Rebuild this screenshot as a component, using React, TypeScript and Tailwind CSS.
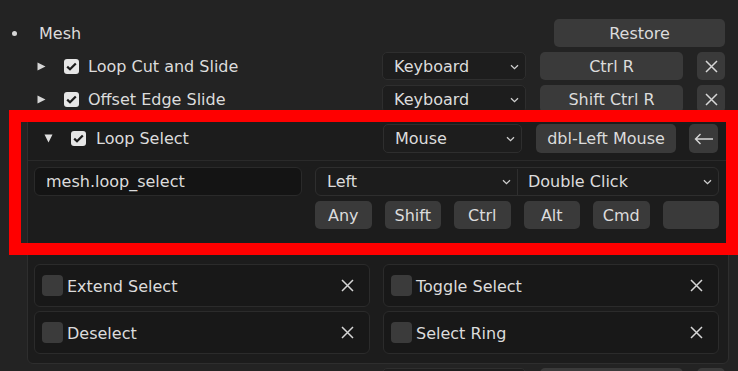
import React from 'react'

const font = { fontFamily: '"DejaVu Sans", "Liberation Sans", sans-serif' }

function Chevron() {
  return (
    <svg width="9" height="6" viewBox="0 0 9 6" className="shrink-0">
      <path d="M1 1.2 L4.5 4.6 L8 1.2" fill="none" stroke="#cfcfcf" strokeWidth="1.3" />
    </svg>
  )
}

function XIcon({ size = 13 }: { size?: number }) {
  return (
    <svg width={size} height={size} viewBox="0 0 13 13">
      <path d="M1 1 L12 12 M12 1 L1 12" stroke="#d6d6d6" strokeWidth="1.5" fill="none" />
    </svg>
  )
}

function Check() {
  return (
    <span className="flex h-[15px] w-[15px] items-center justify-center rounded-[3px] bg-[#e6e6e6]">
      <svg width="11" height="9" viewBox="0 0 11 9">
        <path d="M1.2 4.6 L4 7.3 L9.8 1.4" fill="none" stroke="#1b1b1b" strokeWidth="2.2" />
      </svg>
    </span>
  )
}

function TriRight() {
  return (
    <svg width="9" height="9" viewBox="0 0 9 9" className="shrink-0">
      <path d="M0.5 0.5 L8.5 4.5 L0.5 8.5 Z" fill="#d6d6d6" />
    </svg>
  )
}

function TriDown() {
  return (
    <svg width="9" height="9" viewBox="0 0 9 9" className="shrink-0">
      <path d="M0.5 0.5 L8.5 0.5 L4.5 8.5 Z" fill="#e0e0e0" />
    </svg>
  )
}

function Dropdown({ label, className }: { label: string; className: string }) {
  return (
    <div
      className={`flex h-[28px] items-center justify-between rounded-[5px] border border-[#2e2e2e] bg-[#1d1d1d] pl-[11px] pr-[6px] pt-[1px] ${className}`}
    >
      <span>{label}</span>
      <Chevron />
    </div>
  )
}

function Btn({ children, className }: { children?: React.ReactNode; className: string }) {
  return (
    <div className={`flex h-[28px] items-center justify-center rounded-[5px] bg-[#3a3a3a] pt-[1px] ${className}`}>
      {children}
    </div>
  )
}

function CollapsedRow({ label, keys }: { label: string; keys: string }) {
  return (
    <div className="flex h-[28px] items-center pr-[13px]">
      <div className="flex flex-1 items-center pl-[37px]">
        <TriRight />
        <span className="ml-[18px]">
          <Check />
        </span>
        <span className="ml-[9px] pt-[1px]">{label}</span>
      </div>
      <Dropdown label="Keyboard" className="w-[144px]" />
      <Btn className="ml-[14px] w-[143px]">{keys}</Btn>
      <Btn className="ml-[14px] w-[28px]">
        <XIcon />
      </Btn>
    </div>
  )
}

function PropItem({ label }: { label: string }) {
  return (
    <div className="flex h-[43px] items-center rounded-[6px] border border-[#2b2b2b] bg-[#181818] pl-[7px] pr-[15px]">
      <span className="h-[21px] w-[21px] rounded-[4px] bg-[#3b3b3b]" />
      <span className="ml-[4px] flex-1 pt-[2px]">{label}</span>
      <XIcon />
    </div>
  )
}

export default function App() {
  const mods = ['Any', 'Shift', 'Ctrl', 'Alt', 'Cmd', '']
  return (
    <div
      className="relative h-[371px] w-[738px] overflow-hidden bg-[#232323] pt-[19px] text-[16px] leading-none text-[#dcdcdc]"
      style={font}
    >
      {/* category */}
      <div className="flex h-[28px] items-center pr-[13px]">
        <span className="ml-[12px] h-[5px] w-[5px] rounded-full bg-[#d6d6d6]" />
        <span className="ml-[22px] pt-[1px]">Mesh</span>
        <Btn className="ml-auto w-[171px]">Restore</Btn>
      </div>

      <div className="mt-[5px] flex flex-col gap-[5px]">
        <CollapsedRow label="Loop Cut and Slide" keys="Ctrl R" />
        <CollapsedRow label="Offset Edge Slide" keys="Shift Ctrl R" />
      </div>

      {/* expanded item */}
      <div className="ml-[27px] mr-[9px] mt-[4px] rounded-[6px] border border-[#2e2e2e] bg-[#1c1c1c] pb-[9px]">
        <div className="mt-[6px] flex h-[29px] items-center pr-[10px]">
          <div className="flex flex-1 items-center pl-[16px]">
            <TriDown />
            <span className="ml-[18px]">
              <Check />
            </span>
            <span className="ml-[10px] pt-[1px]">Loop Select</span>
          </div>
          <Dropdown label="Mouse" className="h-[29px] w-[139px] bg-[#1c1c1c]" />
          <Btn className="ml-[14px] h-[29px] w-[140px]">dbl-Left Mouse</Btn>
          <Btn className="ml-[13px] h-[29px] w-[29px]">
            <svg width="20" height="12" viewBox="0 0 20 12">
              <path d="M19 6 L1.5 6 M6.5 1 L1.5 6 L6.5 11" fill="none" stroke="#d6d6d6" strokeWidth="1.4" />
            </svg>
          </Btn>
        </div>

        <div className="mt-[7px] border-t border-[#2a2a2a] pl-[6px] pr-[9px] pt-[6px]">
          <div className="flex h-[29px]">
            <div className="flex w-[268px] items-center rounded-[6px] border border-[#2a2a2a] bg-[#141414] pl-[11px] pt-[1px]">
              mesh.loop_select
            </div>
            <div className="ml-[13px] flex flex-1 rounded-[6px] border border-[#2e2e2e] pt-[1px]">
              <div className="flex flex-1 items-center justify-between border-r border-[#2e2e2e] pl-[11px] pr-[6px]">
                <span>Left</span>
                <Chevron />
              </div>
              <div className="flex flex-1 items-center justify-between pl-[10px] pr-[6px]">
                <span>Double Click</span>
                <Chevron />
              </div>
            </div>
          </div>

          <div className="mt-[5px] flex gap-[13px] pl-[281px]">
            {mods.map((m, i) => (
              <Btn key={i} className="w-[57px]">
                {m}
              </Btn>
            ))}
          </div>

          <div className="mt-[35px] grid grid-cols-2 gap-x-[13px] gap-y-[4px]">
            <PropItem label="Extend Select" />
            <PropItem label="Toggle Select" />
            <PropItem label="Deselect" />
            <PropItem label="Select Ring" />
          </div>
        </div>
      </div>

      {/* next item, only its top edge shows */}
      <div className="mt-[4px] flex h-[28px] pr-[13px]">
        <div className="flex-1" />
        <div className="w-[144px] rounded-[5px] border border-[#2e2e2e] bg-[#1d1d1d]" />
        <div className="ml-[14px] w-[143px] rounded-[5px] bg-[#3a3a3a]" />
        <div className="ml-[14px] w-[28px] rounded-[5px] bg-[#3a3a3a]" />
      </div>

      {/* highlight annotation */}
      <div className="pointer-events-none absolute left-[9px] top-[110px] h-[145px] w-[729px] border-[12px] border-[#ff0000]" />
    </div>
  )
}
